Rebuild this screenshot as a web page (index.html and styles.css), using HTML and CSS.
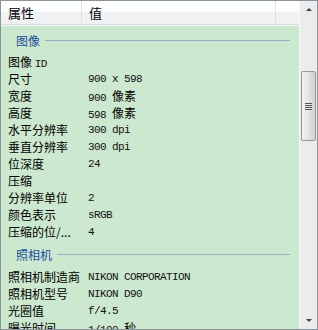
FILE: index.html
```html
<!DOCTYPE html>
<html lang="zh-CN">
<head>
  <meta charset="UTF-8" />
  <title>属性</title>
  <link rel="stylesheet" href="styles.css">
</head>
<body>
  <div class="frame">
    <div class="list">
      <div class="head">
        <div class="hcell name">属性</div>
        <div class="hcell value">值</div>
        <div class="hcell rest"></div>
      </div>
      <div class="rows">
        <div class="group first"><span>图像</span><i></i></div>
        <div class="row"><span class="k">图像 <b class="m">ID</b></span><span class="v"></span></div>
        <div class="row"><span class="k">尺寸</span><span class="v m">900 x 598</span></div>
        <div class="row"><span class="k">宽度</span><span class="v"><b class="m">900 </b>像素</span></div>
        <div class="row"><span class="k">高度</span><span class="v"><b class="m">598 </b>像素</span></div>
        <div class="row"><span class="k">水平分辨率</span><span class="v m">300 dpi</span></div>
        <div class="row"><span class="k">垂直分辨率</span><span class="v m">300 dpi</span></div>
        <div class="row"><span class="k">位深度</span><span class="v m">24</span></div>
        <div class="row"><span class="k">压缩</span><span class="v"></span></div>
        <div class="row"><span class="k">分辨率单位</span><span class="v m">2</span></div>
        <div class="row"><span class="k">颜色表示</span><span class="v m">sRGB</span></div>
        <div class="row"><span class="k">压缩的位/...</span><span class="v m">4</span></div>
        <div class="group"><span>照相机</span><i></i></div>
        <div class="row"><span class="k">照相机制造商</span><span class="v m">NIKON CORPORATION</span></div>
        <div class="row"><span class="k">照相机型号</span><span class="v m">NIKON D90</span></div>
        <div class="row"><span class="k">光圈值</span><span class="v m">f/4.5</span></div>
        <div class="row"><span class="k">曝光时间</span><span class="v"><b class="m">1/100 </b>秒</span></div>
      </div>
    </div>
    <div class="scroll">
      <div class="arrow up"></div>
      <div class="track">
        <div class="thumb"><span class="grip"></span></div>
      </div>
      <div class="arrow down"></div>
    </div>
  </div>
</body>
</html>
```

FILE: styles.css
```css
body {
  margin: 0;
  font-family: "Noto Sans CJK SC", sans-serif;
  font-size: 12px;
  color: #000;
}
.frame {
  width: 318px;
  height: 330px;
  box-sizing: border-box;
  border: 1px solid #8a949c;
  display: flex;
  overflow: hidden;
  background: #fff;
}
.list {
  flex: 1;
  display: flex;
  flex-direction: column;
  min-width: 0;
}
.head {
  height: 23px;
  display: flex;
  background: linear-gradient(#fff 0, #fff 45%, #f2f3f5 46%, #eef0f2 100%);
  border-bottom: 1px solid #d8dadc;
  flex: none;
}
.hcell {
  font-size: 13px;
  line-height: 23px;
  padding-left: 7px;
  border-right: 1px solid #dfe2e6;
}
.hcell.name { width: 73px; }
.hcell.value { width: 186px; }
.hcell.rest { flex: 1; border-right: 0; }
.rows {
  flex: 1;
  background: #cce8cf;
  border-top: 1px solid #f4f6f4;
  overflow: hidden;
}
.group {
  height: 28px;
  display: flex;
  align-items: center;
  padding-left: 15px;
  padding-right: 9px;
  color: #1e4f9c;
}
.group.first {
  height: 26px;
  margin-top: 1px;
}
.group i {
  flex: 1;
  height: 1px;
  margin-left: 5px;
  background: #8fb0c0;
}
.row {
  height: 17px;
  display: flex;
  align-items: center;
  white-space: nowrap;
}
.k {
  width: 80px;
  padding-left: 7px;
  box-sizing: border-box;
  overflow: hidden;
}
.v {
  padding-left: 7px;
}
.m {
  font-family: "Liberation Mono", monospace;
  font-size: 11px;
  letter-spacing: -0.6px;
  font-weight: normal;
  color: #111;
}
.scroll {
  width: 17px;
  flex: none;
  display: flex;
  flex-direction: column;
  background: #ececec;
  border-left: 1px solid #f8f8f8;
}
.arrow {
  height: 17px;
  display: flex;
  align-items: center;
  justify-content: center;
  flex: none;
}
.arrow::before {
  content: "";
  border-left: 3px solid transparent;
  border-right: 3px solid transparent;
}
.arrow.up::before { border-bottom: 3px solid #404040; }
.arrow.down::before { border-top: 3px solid #404040; }
.track {
  flex: 1;
  padding-top: 53px;
}
.thumb {
  height: 70px;
  margin: 0 1px;
  border: 1px solid #979797;
  border-radius: 2px;
  background: linear-gradient(90deg, #f2f2f2, #e4e4e4 50%, #cfcfcf);
  display: flex;
  align-items: center;
  justify-content: center;
  box-sizing: border-box;
}
.grip {
  width: 7px;
  height: 7px;
  background: repeating-linear-gradient(#555 0 1px, transparent 1px 2px);
}
```
